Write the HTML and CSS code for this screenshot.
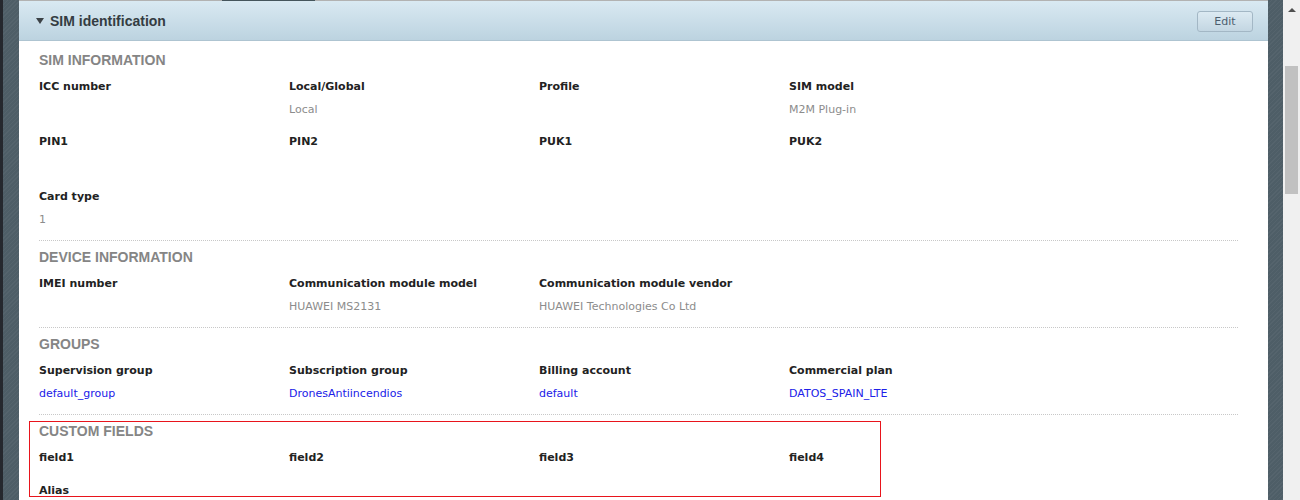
FILE: index.html
```html
<!DOCTYPE html>
<html>
<head>
<meta charset="utf-8">
<link rel="stylesheet" href="styles.css">
</head>
<body>
<div class="page">
  <div class="panel">
    <div class="tabline"></div>
    <div class="panel-header">
      <div class="title"><span class="caret"></span>SIM identification</div>
      <button class="edit-btn">Edit</button>
    </div>
    <div class="panel-body">
      <section class="group">
        <h3 class="group-title">SIM INFORMATION</h3>
        <div class="fields">
          <div class="field"><div class="label">ICC number</div><div class="value"></div></div>
          <div class="field"><div class="label">Local/Global</div><div class="value">Local</div></div>
          <div class="field"><div class="label">Profile</div><div class="value"></div></div>
          <div class="field"><div class="label">SIM model</div><div class="value">M2M Plug-in</div></div>
          <div class="field"><div class="label">PIN1</div><div class="value"></div></div>
          <div class="field"><div class="label">PIN2</div><div class="value"></div></div>
          <div class="field"><div class="label">PUK1</div><div class="value"></div></div>
          <div class="field"><div class="label">PUK2</div><div class="value"></div></div>
          <div class="field"><div class="label">Card type</div><div class="value">1</div></div>
        </div>
      </section>
      <section class="group">
        <h3 class="group-title">DEVICE INFORMATION</h3>
        <div class="fields">
          <div class="field"><div class="label">IMEI number</div><div class="value"></div></div>
          <div class="field"><div class="label">Communication module model</div><div class="value">HUAWEI MS2131</div></div>
          <div class="field"><div class="label">Communication module vendor</div><div class="value">HUAWEI Technologies Co Ltd</div></div>
        </div>
      </section>
      <section class="group">
        <h3 class="group-title">GROUPS</h3>
        <div class="fields">
          <div class="field"><div class="label">Supervision group</div><div class="value link">default_group</div></div>
          <div class="field"><div class="label">Subscription group</div><div class="value link">DronesAntiincendios</div></div>
          <div class="field"><div class="label">Billing account</div><div class="value link">default</div></div>
          <div class="field"><div class="label">Commercial plan</div><div class="value link">DATOS_SPAIN_LTE</div></div>
        </div>
      </section>
      <section class="group custom">
        <div class="highlight"></div>
        <h3 class="group-title">CUSTOM FIELDS</h3>
        <div class="fields compact">
          <div class="field"><div class="label">field1</div></div>
          <div class="field"><div class="label">field2</div></div>
          <div class="field"><div class="label">field3</div></div>
          <div class="field"><div class="label">field4</div></div>
          <div class="field"><div class="label">Alias</div></div>
        </div>
      </section>
    </div>
  </div>
</div>
<div class="scrollbar">
  <div class="scroll-arrow"></div>
  <div class="scroll-thumb"></div>
</div>
</body>
</html>
```

FILE: styles.css
```css
html, body {
  margin: 0;
  padding: 0;
  height: 500px;
  overflow: hidden;
}
body {
  display: flex;
  font-family: "DejaVu Sans", Tahoma, sans-serif;
}
.page {
  flex: 1;
  display: flex;
  border-left: 3px solid #25282e;
  padding: 0 15px 0 16px;
  background-color: #4e5e67;
  background-image: repeating-linear-gradient(135deg, rgba(255,255,255,0.04) 0 1px, rgba(0,0,0,0) 1px 3px);
  overflow: hidden;
}
.panel {
  flex: 1;
  background: #fff;
  display: flex;
  flex-direction: column;
}
.panel > * {
  flex-shrink: 0;
}
.tabline {
  height: 1px;
  background: linear-gradient(90deg, #b2b2b2 0 203px, #45555c 203px 296px, #b2b2b2 296px);
}
.panel-header {
  height: 39px;
  border-bottom: 1px solid #aec4d1;
  background: linear-gradient(#d9e9f2, #bcd3e0);
  display: flex;
  align-items: center;
  justify-content: space-between;
  padding: 0 15px 0 17px;
}
.title {
  display: flex;
  align-items: center;
  font-family: "Liberation Sans", Arial, sans-serif;
  font-weight: bold;
  font-size: 14px;
  color: #343c42;
}
.caret {
  width: 0;
  height: 0;
  border-left: 4px solid transparent;
  border-right: 4px solid transparent;
  border-top: 6px solid #3c4246;
  margin-right: 6px;
  margin-top: 1px;
}
.edit-btn {
  width: 56px;
  height: 21px;
  margin-top: 2px;
  border: 1px solid #a3b7c5;
  border-radius: 3px;
  background: linear-gradient(#dceaf2, #c3d6e2);
  font-family: "DejaVu Sans", Tahoma, sans-serif;
  font-size: 11px;
  color: #4c5d6e;
  padding: 0;
}
.panel-body {
  padding: 0 30px 0 20px;
}
.group {
  position: relative;
  border-bottom: 1px dotted #c8c8c8;
  padding: 7px 0 12px;
}
.group:first-child {
  padding-top: 10px;
}
.group-title {
  margin: 0 0 10px;
  font-family: "Liberation Sans", Arial, sans-serif;
  font-weight: bold;
  font-size: 14px;
  line-height: 18px;
  color: #858585;
}
.fields {
  display: grid;
  grid-template-columns: repeat(4, 250px);
  row-gap: 16px;
}
.fields.compact {
  row-gap: 17px;
}
.label {
  font-weight: bold;
  font-size: 11px;
  line-height: 16px;
  color: #222;
}
.value {
  margin-top: 7px;
  min-height: 16px;
  font-size: 11px;
  line-height: 16px;
  color: #8c8c8c;
}
.value.link {
  color: #2020e8;
}
.custom {
  border-bottom: none;
}
.highlight {
  position: absolute;
  left: -10px;
  top: 6px;
  width: 850px;
  height: 74px;
  border: 1px solid #e8141c;
}
.scrollbar {
  width: 17px;
  background: #f0f0f0;
  position: relative;
  display: flex;
  flex-direction: column;
  align-items: center;
}
.scroll-arrow {
  margin-top: 8px;
  width: 0;
  height: 0;
  border-left: 4px solid transparent;
  border-right: 4px solid transparent;
  border-bottom: 4px solid #505050;
}
.scroll-thumb {
  margin-top: 54px;
  width: 13px;
  height: 128px;
  background: #c1c1c1;
}
```
